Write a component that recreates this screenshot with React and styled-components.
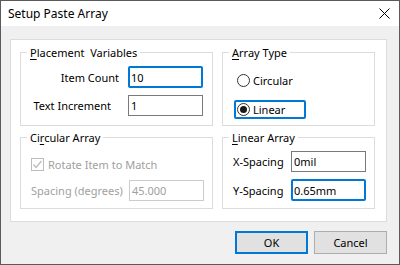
import React from "react";
import styled, { createGlobalStyle } from "styled-components";

const GlobalStyle = createGlobalStyle`
  html, body {
    margin: 0;
    padding: 0;
    background: #ffffff;
  }
  body {
    font-family: "Noto Sans", "Open Sans", sans-serif;
    font-size: 11px;
    color: #000;
  }
`;

const Window = styled.div`
  width: 400px;
  height: 265px;
  box-sizing: border-box;
  border: 1px solid #5a5a5a;
  display: flex;
  flex-direction: column;
  background: #f0f0f0;
`;

const TitleBar = styled.div`
  height: 25px;
  background: #ffffff;
  display: flex;
  align-items: center;
  justify-content: space-between;
  padding: 0 9px 0 7px;
`;

const Title = styled.span`
  font-size: 12px;
  color: #000;
`;

const Body = styled.div`
  flex: 1;
  padding: 13px 12px 0 9px;
  display: flex;
  flex-direction: column;
`;

const Panel = styled.div`
  height: 183px;
  box-sizing: border-box;
  background: #ffffff;
  border: 1px solid #dcdcdc;
  padding: 12px 11px 0 9px;
  display: grid;
  grid-template-columns: 193px 153px;
  grid-template-rows: 74px 72px;
  column-gap: 9px;
  row-gap: 11px;
`;

const Group = styled.div`
  box-sizing: border-box;
  border: 1px solid #dcdcdc;
  display: flex;
  flex-direction: column;
`;

const Legend = styled.div`
  width: fit-content;
  margin: -8px 0 0 6px;
  padding: 0 3px;
  line-height: 15px;
  background: #ffffff;
  white-space: pre;
  color: ${(p) => (p.$disabled ? "#000" : "#000")};
`;

const U = styled.span`
  text-decoration: underline;
  text-underline-offset: 2px;
`;

const Fields = styled.div`
  display: grid;
  grid-template-columns: ${(p) => p.$label}px 75px;
  row-gap: 7px;
  align-items: center;
  padding: ${(p) => p.$top}px 0 0 ${(p) => p.$left}px;
`;

const Label = styled.span`
  justify-self: ${(p) => (p.$end ? "end" : "start")};
  margin-right: ${(p) => p.$gap || 0}px;
  color: ${(p) => (p.$disabled ? "#a0a0a0" : "#000")};
  white-space: nowrap;
`;

const Input = styled.input`
  width: 75px;
  height: ${(p) => (p.$focused ? 22 : 21)}px;
  box-sizing: border-box;
  margin: 0;
  font-family: inherit;
  font-size: 11px;
  color: ${(p) => (p.disabled ? "#a0a0a0" : "#000")};
  background: #ffffff;
  outline: none;
  border: ${(p) =>
    p.$focused
      ? "2px solid #0078d7"
      : p.disabled
      ? "1px solid #cccccc"
      : "1px solid #7a7a7a"};
  border-radius: ${(p) => (p.$focused ? "2px" : "0")};
  padding: 0 0 0 ${(p) => (p.$focused ? 1 : 2)}px;
`;

const RadioList = styled.div`
  display: flex;
  flex-direction: column;
  gap: 10px;
  padding: 11px 0 0 12px;
`;

const RadioRow = styled.div`
  width: 72px;
  height: 19px;
  box-sizing: border-box;
  display: flex;
  align-items: center;
  gap: 3px;
  padding-left: 1px;
  margin-left: -1px;
  border: 2px solid ${(p) => (p.$focused ? "#0078d7" : "transparent")};
  border-radius: 2px;
`;

const RadioCircle = styled.span`
  width: 13px;
  height: 13px;
  box-sizing: border-box;
  border-radius: 50%;
  border: 1px solid #333333;
  background: #ffffff;
  display: flex;
  align-items: center;
  justify-content: center;
  &::after {
    content: "";
    width: 7px;
    height: 7px;
    border-radius: 50%;
    background: ${(p) => (p.$checked ? "#1a1a1a" : "transparent")};
  }
`;

const CheckRow = styled.div`
  display: flex;
  align-items: center;
  gap: 4px;
  padding: 12px 0 0 10px;
  color: #a0a0a0;
`;

const CheckBox = styled.span`
  width: 13px;
  height: 13px;
  box-sizing: border-box;
  border: 1px solid #bcbcbc;
  background: #ffffff;
  display: flex;
  align-items: center;
  justify-content: center;
`;

const Buttons = styled.div`
  display: flex;
  justify-content: flex-end;
  gap: 6px;
  padding-top: 9px;
`;

const Button = styled.button`
  width: 73px;
  height: 23px;
  box-sizing: border-box;
  margin: 0;
  padding: 0;
  font-family: inherit;
  font-size: 11px;
  color: #000;
  background: #e1e1e1;
  border: ${(p) => (p.$default ? "2px solid #0078d7" : "1px solid #adadad")};
`;

export default function App() {
  return (
    <>
      <GlobalStyle />
      <Window>
        <TitleBar>
          <Title>Setup Paste Array</Title>
          <svg width="11" height="11" viewBox="0 0 11 11">
            <path d="M0.5 0.5 L10.5 10.5 M10.5 0.5 L0.5 10.5" stroke="#000" strokeWidth="1" />
          </svg>
        </TitleBar>
        <Body>
          <Panel>
            <Group>
              <Legend>
                <U>P</U>lacement  Variables
              </Legend>
              <Fields $label={107} $top={6} $left={0}>
                <Label $end $gap={9}>Item Count</Label>
                <Input $focused defaultValue="10" />
                <Label $end $gap={17}>Text Increment</Label>
                <Input defaultValue="1" />
              </Fields>
            </Group>

            <Group>
              <Legend>
                <U>A</U>rray Type
              </Legend>
              <RadioList>
                <RadioRow>
                  <RadioCircle />
                  <span>Circular</span>
                </RadioRow>
                <RadioRow $focused>
                  <RadioCircle $checked />
                  <span>Linear</span>
                </RadioRow>
              </RadioList>
            </Group>

            <Group>
              <Legend>
                Ci<U>r</U>cular Array
              </Legend>
              <CheckRow>
                <CheckBox>
                  <svg width="11" height="11" viewBox="0 0 11 11">
                    <path d="M1.5 5.5 L4 8.5 L9.5 2" fill="none" stroke="#bcbcbc" strokeWidth="1.3" />
                  </svg>
                </CheckBox>
                <span>Rotate Item to Match</span>
              </CheckRow>
              <Fields $label={98} $top={8} $left={10}>
                <Label $disabled>Spacing (degrees)</Label>
                <Input disabled defaultValue="45.000" />
              </Fields>
            </Group>

            <Group>
              <Legend>
                <U>L</U>inear Array
              </Legend>
              <Fields $label={58} $top={6} $left={10}>
                <Label>X-Spacing</Label>
                <Input defaultValue="0mil" />
                <Label>Y-Spacing</Label>
                <Input $focused defaultValue="0.65mm" />
              </Fields>
            </Group>
          </Panel>
          <Buttons>
            <Button $default>OK</Button>
            <Button>Cancel</Button>
          </Buttons>
        </Body>
      </Window>
    </>
  );
}
